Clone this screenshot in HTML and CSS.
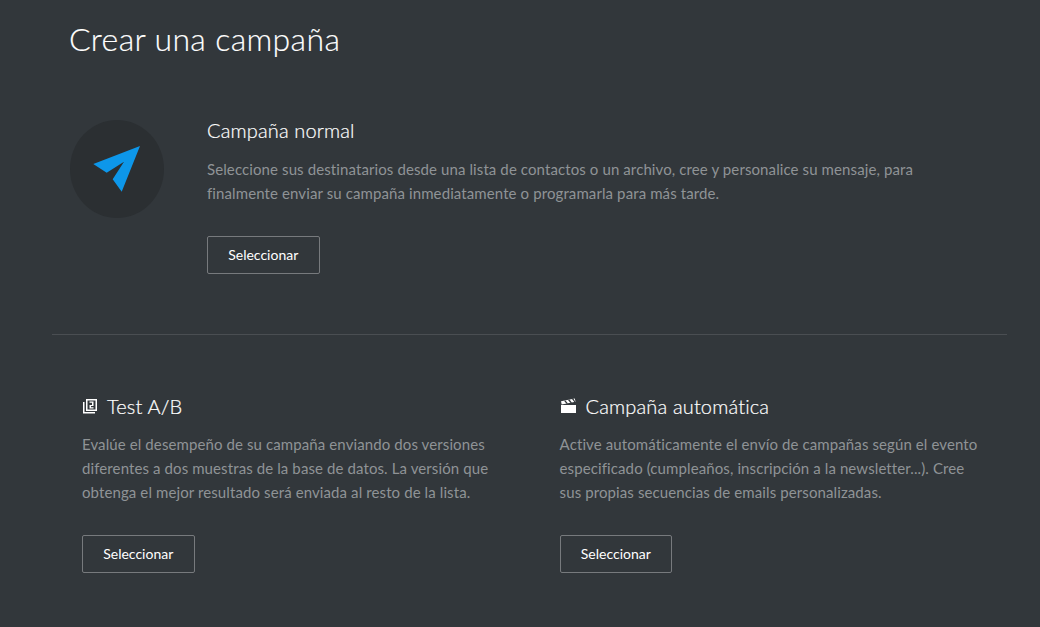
FILE: index.html
```html
<!DOCTYPE html>
<html lang="es">
<head>
<meta charset="utf-8">
<title>Crear una campaña</title>
<link rel="stylesheet" href="styles.css">
</head>
<body>
<main class="page">
  <h1 class="title">Crear una campaña</h1>
  <section class="normal">
    <div class="circle">
      <svg class="plane" width="94" height="98" viewBox="70 120 94 98"><path fill="#0d97ea" d="M140 146 93.300 164 106.700 172.700 124 161.700 112.700 179.300 121.700 191.700Z"/></svg>
    </div>
    <div class="normal-body">
      <h2 class="heading">Campaña normal</h2>
      <p class="text">Seleccione sus destinatarios desde una lista de contactos o un archivo, cree y personalice su mensaje, para finalmente enviar su campaña inmediatamente o programarla para más tarde.</p>
      <a class="btn">Seleccionar</a>
    </div>
  </section>
  <hr class="divider">
  <section class="options">
    <article class="option">
      <h2 class="heading heading-icon">
        <svg class="icon" width="16" height="16" viewBox="0 0 16 16"><path fill="#fff" fill-rule="evenodd" d="M4 1h11v12H4zM5.500 2.500v9h8v-9z"/><path fill="#fff" d="M1 4h1.500v10H13v1.500H1z"/><path fill="#fff" d="M7.500 3.500h4V8H9v1.200h2.500v1.300h-4V7h2.500V4.800H7.500z"/></svg>
        Test A/B
      </h2>
      <p class="text">Evalúe el desempeño de su campaña enviando dos versiones diferentes a dos muestras de la base de datos. La versión que obtenga el mejor resultado será enviada al resto de la lista.</p>
      <a class="btn">Seleccionar</a>
    </article>
    <article class="option">
      <h2 class="heading heading-icon">
        <svg class="icon" width="17" height="16" viewBox="0 0 17 16"><path fill="#fff" d="M1 7h15v8H1zM1 3.300 14.800 0.500 15.500 3.800 1.700 6.500z"/><path fill="#32373b" d="M4 2.700 6.500 5.800 8 5.500 5.500 2.400zM8 1.900 10.500 5 12 4.700 9.500 1.600zM12 1.100 14.500 4.200 15.500 4 13.500 0.800z"/></svg>
        Campaña automática
      </h2>
      <p class="text">Active automáticamente el envío de campañas según el evento especificado (cumpleaños, inscripción a la newsletter...). Cree sus propias secuencias de emails personalizadas.</p>
      <a class="btn">Seleccionar</a>
    </article>
  </section>
</main>
</body>
</html>
```
FILE: styles.css
```css
* { box-sizing: border-box; }
html, body { margin: 0; height: 100%; }
body {
  background: #32373b;
  color: #fff;
  font-family: "Lato", "Open Sans", sans-serif;
  overflow: hidden;
}
.page { width: 1040px; height: 627px; padding: 0 33px 0 52px; }
.title {
  margin: 0;
  padding: 18px 0 0 17px;
  height: 60px;
  font-size: 32px;
  line-height: 42px;
  font-weight: 300;
  letter-spacing: 0.35px;
  -webkit-text-stroke: 0.15px #fff;
}
.normal {
  display: flex;
  padding: 60px 0 0 18px;
  height: 214px;
}
.circle {
  width: 94px;
  height: 98px;
  border-radius: 50%;
  background: #2b2f32;
  flex: none;
}
.plane { display: block; }
.normal-body { margin-left: 43px; width: 720px; margin-top: -2px; }
.normal-body .text { margin: 15px 0 31px; }
.heading {
  margin: 0;
  font-size: 20px;
  line-height: 24px;
  font-weight: 300;
  letter-spacing: 0.15px;
  -webkit-text-stroke: 0.2px #fff;
}
.text {
  margin: 14px 0 31px;
  font-size: 15px;
  line-height: 24px;
  letter-spacing: 0.105px;
  color: #8f9396;
}
.btn {
  display: flex;
  align-items: center;
  justify-content: center;
  width: 112.5px;
  height: 38px;
  padding-bottom: 2px;
  border: 1px solid #777a7d;
  border-radius: 2px;
  font-size: 14px;
  color: #fff;
}
.divider {
  margin: 60px 0 0;
  border: 0;
  border-top: 1px solid #4a4e52;
}
.options {
  display: flex;
  gap: 57.6px;
  padding: 59px 0 0 30px;
}
.option { width: 420px; }
.heading-icon { display: flex; align-items: center; gap: 9px; }
.icon { flex: none; }
```
